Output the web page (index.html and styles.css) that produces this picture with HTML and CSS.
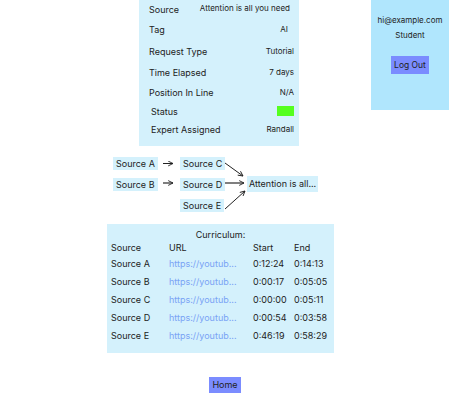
FILE: index.html
```html
<!DOCTYPE html>
<html>
<head>
<meta charset="utf-8">
<link rel="stylesheet" href="styles.css">
</head>
<body>
<div class="page">
  <div class="top">
    <div class="details">
      <div class="row"><span class="label">Source</span><span class="value v-source">Attention is all you need</span></div>
      <div class="row"><span class="label">Tag</span><span class="value v-tag">AI</span></div>
      <div class="row"><span class="label">Request Type</span><span class="value">Tutorial</span></div>
      <div class="row"><span class="label">Time Elapsed</span><span class="value">7 days</span></div>
      <div class="row"><span class="label">Position In Line</span><span class="value">N/A</span></div>
      <div class="row indent"><span class="label">Status</span><span class="status"></span></div>
      <div class="row indent"><span class="label">Expert Assigned</span><span class="value">Randall</span></div>
    </div>
    <div class="account">
      <div class="email">hi@example.com</div>
      <div class="role">Student</div>
      <button class="btn logout">Log Out</button>
    </div>
  </div>

  <div class="diagram">
    <svg class="arrows" width="449" height="78" viewBox="0 0 449 78">
      <defs>
        <marker id="head" viewBox="0 0 10 10" refX="9" refY="5" markerWidth="6" markerHeight="6" orient="auto" markerUnits="userSpaceOnUse">
          <path d="M1 1 L9 5 L1 9" fill="none" stroke="#222" stroke-width="1.5"/>
        </marker>
      </defs>
      <line x1="163" y1="17.5" x2="173" y2="17.5" stroke="#222" stroke-width="1" marker-end="url(#head)"/>
      <line x1="163" y1="37" x2="173" y2="37" stroke="#555" stroke-width="1.5" marker-end="url(#head)"/>
      <line x1="225" y1="17" x2="243" y2="30" stroke="#222" stroke-width="1" marker-end="url(#head)"/>
      <line x1="225" y1="37" x2="244" y2="37" stroke="#555" stroke-width="1.5" marker-end="url(#head)"/>
      <line x1="225" y1="63" x2="245" y2="45" stroke="#222" stroke-width="1" marker-end="url(#head)"/>
    </svg>
    <div class="node n-a">Source A</div>
    <div class="node n-b">Source B</div>
    <div class="node n-c">Source C</div>
    <div class="node n-d">Source D</div>
    <div class="node n-e">Source E</div>
    <div class="node n-t">Attention is all...</div>
  </div>

  <div class="curriculum">
    <div class="title">Curriculum:</div>
    <table class="table">
      <thead>
        <tr><th class="c-src">Source</th><th class="c-url">URL</th><th class="c-start">Start</th><th>End</th></tr>
      </thead>
      <tbody>
        <tr><td>Source A</td><td class="link">https://youtub...</td><td>0:12:24</td><td>0:14:13</td></tr>
        <tr><td>Source B</td><td class="link">https://youtub...</td><td>0:00:17</td><td>0:05:05</td></tr>
        <tr><td>Source C</td><td class="link">https://youtub...</td><td>0:00:00</td><td>0:05:11</td></tr>
        <tr><td>Source D</td><td class="link">https://youtub...</td><td>0:00:54</td><td>0:03:58</td></tr>
        <tr><td>Source E</td><td class="link">https://youtub...</td><td>0:46:19</td><td>0:58:29</td></tr>
      </tbody>
    </table>
  </div>

  <button class="btn home">Home</button>
</div>
</body>
</html>
```

FILE: styles.css
```css
* { box-sizing: border-box; }
html, body { margin: 0; padding: 0; background: #ffffff; }
body {
  font-family: Inter, "Noto Sans", sans-serif;
  font-size: 9px;
  color: #222;
  width: 449px;
  height: 400px;
  overflow: hidden;
}
.page { display: flex; flex-direction: column; align-items: flex-start; }

.top {
  display: grid;
  grid-template-columns: 139px 160px 1fr;
  width: 449px;
  align-items: start;
}
.details {
  grid-column: 2;
  background: #d4f1fc;
  height: 146px;
  display: grid;
  grid-template-rows: 19px 20px 24px 18px 22px 16px 20px;
  padding: 0 5px 0 10px;
}
.row { display: flex; align-items: center; justify-content: space-between; }
.row.indent { padding-left: 2px; }
.label { font-size: 9px; }
.value { font-size: 8px; }
.v-source { margin-right: 4px; margin-top: -4px; }
.v-tag { margin-right: 6px; }
.status { width: 17px; height: 10px; background: #55ff1f; }

.account {
  grid-column: 3;
  justify-self: end;
  width: 78px;
  height: 110px;
  background: #b0e6fd;
  display: flex;
  flex-direction: column;
  align-items: center;
  padding-top: 14px;
  font-size: 8px;
}
.email, .role { line-height: 12px; }
.role { margin-top: 3px; }

.btn {
  font-family: Inter, "Noto Sans", sans-serif;
  font-size: 9px;
  color: #222;
  background: #7b8cff;
  border: none;
  padding: 0;
  height: 18px;
  line-height: 18px;
}
.logout { margin-top: 15px; width: 38px; font-size: 8.5px; }

.diagram { position: relative; width: 449px; height: 78px; }
.arrows { position: absolute; left: 0; top: 0; }
.node {
  position: absolute;
  background: #d4f1fc;
  height: 13px;
  line-height: 13px;
  padding: 0 3px;
  white-space: nowrap;
}
.n-a { left: 113px; top: 11px; }
.n-b { left: 113px; top: 32px; }
.n-c { left: 180px; top: 11px; }
.n-d { left: 180px; top: 32px; }
.n-e { left: 180px; top: 53px; }
.n-t { left: 247px; top: 30px; height: 16px; line-height: 16px; padding: 0 2px; }

.curriculum {
  margin-left: 107px;
  width: 227px;
  background: #d4f1fc;
  padding: 5px 4px 8px;
}
.title { text-align: center; line-height: 12px; }
.table { border-collapse: collapse; table-layout: fixed; width: 100%; }
.table th { font-weight: normal; text-align: left; height: 14px; padding: 0; line-height: 14px; }
.table td { height: 18px; padding: 0; line-height: 18px; white-space: nowrap; }
.c-src { width: 58px; }
.c-url { width: 84px; }
.c-start { width: 41px; }
.table td.link { color: #7aa3f5; }

.home { margin-left: 209px; margin-top: 24px; width: 32px; height: 16px; line-height: 16px; }
```
